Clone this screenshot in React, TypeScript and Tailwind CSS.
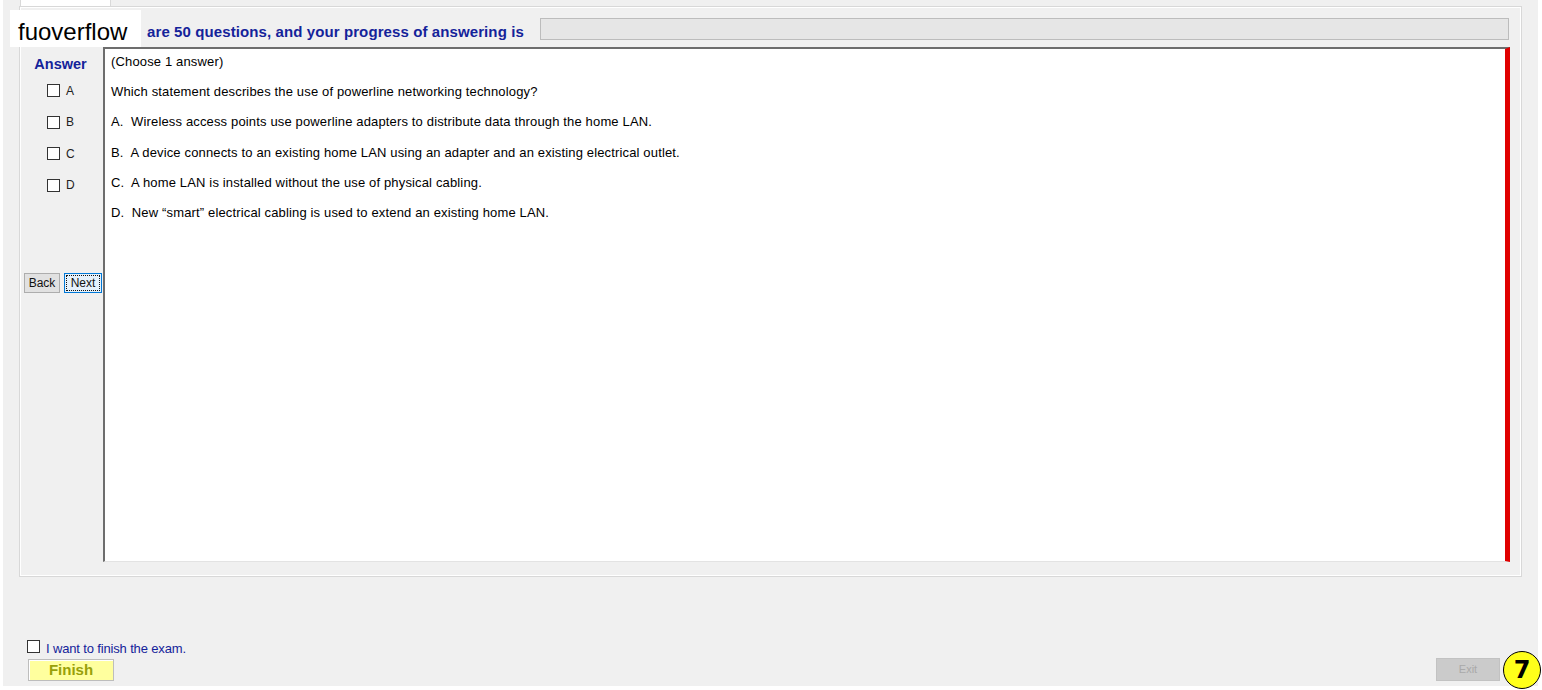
import React from 'react';

const options = [
  'A.  Wireless access points use powerline adapters to distribute data through the home LAN.',
  'B.  A device connects to an existing home LAN using an adapter and an existing electrical outlet.',
  'C.  A home LAN is installed without the use of physical cabling.',
  'D.  New \u201csmart\u201d electrical cabling is used to extend an existing home LAN.',
];

function Box() {
  return <span className="block w-[13px] h-[13px] border border-[#333] bg-white" />;
}

export default function App() {
  return (
    <div className="relative w-[1542px] h-[690px] overflow-hidden bg-white font-['Liberation_Sans',Arial,sans-serif]">
      <div className="ml-[3px] w-[1535px] h-[686px] bg-[#f0f0f0] flex flex-col">
        {/* tab strip */}
        <div className="h-[6px] flex">
          <div className="ml-[17px] w-[91px] h-[6px] bg-white border-x border-[#d9d9d9]" />
        </div>

        {/* main group */}
        <div className="ml-[16px] w-[1503px] h-[571px] border border-[#d8d8d8] shadow-[inset_1px_1px_0_#fff,inset_-1px_-1px_0_#fff] flex flex-col">
          <div className="h-[40px] flex items-start">
            <span className="ml-[127px] mt-[16px] text-[15px] leading-[18px] font-bold tracking-[0.1px] text-[#14239a]">
              are 50 questions, and your progress of answering is
            </span>
            <div className="ml-[16px] mt-[11px] w-[969px] h-[22px] bg-[#e6e6e6] border border-[#bcbcbc]" />
          </div>

          <div className="flex">
            {/* answer column */}
            <div className="w-[83px] flex flex-col">
              <div className="h-[26px] flex items-end justify-center pr-[2px]">
                <span className="text-[14.5px] leading-[17px] font-bold text-[#14239a]">Answer</span>
              </div>
              <div className="mt-[11px] flex flex-col gap-[18.6px] pl-[27px]">
                {['A', 'B', 'C', 'D'].map((l) => (
                  <div key={l} className="flex items-center gap-[6px] h-[13px]">
                    <Box />
                    <span className="text-[12px] text-[#222]">{l}</span>
                  </div>
                ))}
              </div>
              <div className="mt-[81px] flex gap-[4px] pl-[4px]">
                <div className="w-[36px] h-[20px] bg-[#e1e1e1] border border-[#adadad] text-[12px] text-[#111] flex items-center justify-center">
                  Back
                </div>
                <div className="w-[38px] h-[20px] bg-[#e5f1fb] border border-[#0078d7] p-[1px]">
                  <div className="w-full h-full border border-dotted border-[#111] text-[12px] text-[#111] flex items-center justify-center">
                    Next
                  </div>
                </div>
              </div>
            </div>

            {/* question box */}
            <div className="w-[1407px] h-[515px] bg-white border-l-2 border-t-2 border-[#6d6d6d] border-r-[5px] border-r-[#e00000] border-b border-b-[#e3e3e3] flex flex-col gap-[15px] pt-[5px] pl-[6px] text-[13px] leading-[15.2px] tracking-[0.15px] text-black">
              <div>(Choose 1 answer)</div>
              <div>Which statement describes the use of powerline networking technology?</div>
              {options.map((o) => (
                <div key={o} className="whitespace-pre">{o}</div>
              ))}
            </div>
          </div>
        </div>

        {/* bottom controls */}
        <div className="flex-1 flex justify-between items-end pb-[5px]">
          <div className="ml-[24px] flex flex-col gap-[1px]">
            <div className="flex items-center gap-[6px]">
              <Box />
              <span className="text-[13px] leading-[18px] mt-[5px] text-[#14239a] tracking-[-0.15px]">I want to finish the exam.</span>
            </div>
            <div className="ml-[1px] w-[86px] h-[22px] bg-[#ffff9e] border border-[#bdbdbd] shadow-[inset_1px_1px_0_#fff] flex items-center justify-center">
              <span className="text-[15px] font-bold text-[#98a00a]">Finish</span>
            </div>
          </div>
          <div className="mr-[38px] w-[64px] h-[23px] bg-[#cbcbcb] border border-[#c2c2c2] flex items-center justify-center">
            <span className="text-[11px] text-[#a9a9a9]">Exit</span>
          </div>
        </div>
      </div>

      {/* watermark */}
      <div className="absolute left-[10px] top-[10px] w-[131px] h-[37px] bg-white flex items-center pl-[8px] pt-[6px]">
        <span className="text-[24px] text-black leading-none">fuoverflow</span>
      </div>

      {/* page number badge */}
      <div className="absolute left-[1503px] top-[651px] w-[38px] h-[38px] rounded-full bg-[#ffff1a] border-[1.5px] border-black flex items-center justify-center">
        <span className="text-[24px] font-black font-['DejaVu_Sans',sans-serif] text-black leading-none">7</span>
      </div>
    </div>
  );
}
